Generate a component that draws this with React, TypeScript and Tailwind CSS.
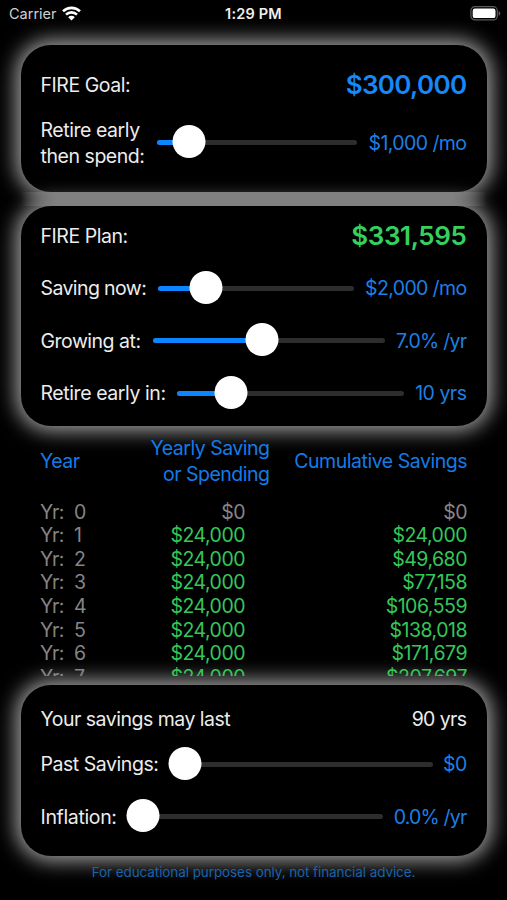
import type { ReactNode } from 'react';

interface SliderRowProps {
  label: ReactNode;
  labelClass: string;
  value: string;
  valueClass: string;
  // thumb centre, in percent of the track
  percent: number;
}

function SliderRow({ label, labelClass, value, valueClass, percent }: SliderRowProps) {
  return (
    <div className="flex items-center text-[19.5px] leading-[26px] whitespace-nowrap">
      <span className={`shrink-0 ${labelClass}`}>{label}</span>
      <div className="relative h-[5px] flex-1 rounded-full bg-[#2d2d2e]">
        <div className="h-full rounded-full bg-[#0a84ff]" style={{ width: `${percent}%` }} />
        <div
          className="absolute -top-[15px] size-[33px] -translate-x-1/2 rounded-full bg-white"
          style={{ left: `${percent}%` }}
        />
      </div>
      <span className={`shrink-0 text-right text-[#1c7fe4] ${valueClass}`}>{value}</span>
    </div>
  );
}

interface CardProps {
  className: string;
  children: ReactNode;
}

function Card({ className, children }: CardProps) {
  return (
    <section
      className={`mx-[20.5px] shrink-0 rounded-[30px] bg-black px-5 shadow-[0_0_20px_5px_#a0a0a0] ${className}`}
    >
      {children}
    </section>
  );
}

function StatusBar() {
  return (
    <header className="flex h-[44.5px] shrink-0 items-start justify-between pt-1 pr-[6px] pl-[9px] leading-5">
      <div className="flex w-[120px] items-center gap-[5px]">
        <span className="text-[14.5px] text-[#d0d0d0]">Carrier</span>
        <svg width="19" height="15" viewBox="0 0 19 15" className="-mt-[2px]" fill="none" stroke="#fff">
          <path d="M1 5.3a12.2 12.2 0 0 1 17 0" strokeWidth="2.6" />
          <path d="M4 8.6a7.9 7.9 0 0 1 11 0" strokeWidth="2.6" />
          <path d="M9.5 14.4 6.2 11.3a4.5 4.5 0 0 1 6.6 0Z" fill="#fff" stroke="none" />
        </svg>
      </div>
      <span className="-ml-[3px] text-[14.5px] font-semibold tracking-[0.2px] text-[#f0f0f0]">1:29 PM</span>
      <div className="flex w-[120px] justify-end pt-[2px]">
        <svg width="31" height="15" viewBox="0 0 31 15" fill="none">
          <rect x="0.9" y="0.7" width="26.4" height="13.2" rx="4" stroke="#5c5c5c" strokeWidth="1.2" />
          <rect x="2.7" y="2.5" width="22.8" height="9.6" rx="2.2" fill="#fff" />
          <path d="M28.6 5v4.8c1-.4 1.7-1.3 1.7-2.4S29.6 5.4 28.6 5Z" fill="#5c5c5c" />
        </svg>
      </div>
    </header>
  );
}

const rows = [
  { year: 0, yearly: '$0', total: '$0' },
  { year: 1, yearly: '$24,000', total: '$24,000' },
  { year: 2, yearly: '$24,000', total: '$49,680' },
  { year: 3, yearly: '$24,000', total: '$77,158' },
  { year: 4, yearly: '$24,000', total: '$106,559' },
  { year: 5, yearly: '$24,000', total: '$138,018' },
  { year: 6, yearly: '$24,000', total: '$171,679' },
  { year: 7, yearly: '$24,000', total: '$207,697' },
];

function SavingsTable() {
  return (
    <div className="relative z-10 flex h-[259px] shrink-0 flex-col px-10 pt-[9px] text-[19.5px]">
      <div className="flex h-[52px] shrink-0 items-center leading-[26px] tracking-[-0.5px] whitespace-nowrap text-[#147be6]">
        <span className="w-[100px]">Year</span>
        <span className="w-[129.5px] text-right">
          Yearly Saving
          <br />
          or Spending
        </span>
        <span className="flex-1 text-right tracking-[-0.47px]">Cumulative Savings</span>
      </div>
      <div className="mt-[13.5px] h-[175.5px] overflow-hidden">
        {rows.map((row) => (
          <div
            key={row.year}
            className={`flex h-[23.6px] items-center leading-none tracking-[-0.5px] ${row.year === 0 ? 'text-[#858585]' : 'text-[#35c759]'}`}
          >
            <span className="w-[34px] text-[#858585]">Yr:</span>
            <span className="w-[66px] text-[#858585]">{row.year}</span>
            <span className="w-[105px] text-right">{row.yearly}</span>
            <span className="flex-1 text-right">{row.total}</span>
          </div>
        ))}
      </div>
    </div>
  );
}

export default function App() {
  return (
    <main className="flex h-[900px] w-[507px] flex-col overflow-hidden bg-black font-['Inter',sans-serif] text-[#ececec]">
      <StatusBar />

      <Card className="flex h-[147px] flex-col pt-[24.5px]">
        <div className="flex h-8 items-center justify-between text-[19.5px]">
          <span className="pt-px tracking-[-0.45px]">FIRE Goal:</span>
          <span className="pb-[2px] text-[26px] font-semibold tracking-[-0.65px] text-[#1688fa]">$300,000</span>
        </div>
        <div className="mt-[15.5px]">
          <SliderRow
            label={
              <>
                Retire early
                <br />
                then spend:
              </>
            }
            labelClass="w-[116px] tracking-[-0.45px]"
            value="$1,000 /mo"
            valueClass="w-[109.5px] tracking-[-0.57px]"
            percent={16}
          />
        </div>
      </Card>

      {/* the two glows merge into one lighter band here */}
      <div className="relative mx-[20.5px] h-[14.5px] shrink-0 bg-[linear-gradient(to_right,transparent,#808080_36px,#808080_calc(100%-36px),transparent)]" />

      <Card className="flex h-[220px] flex-col pt-[14px]">
        <div className="flex h-8 items-center justify-between text-[19.5px]">
          <span className="pt-px tracking-[-0.45px]">FIRE Plan:</span>
          <span className="pb-[2px] text-[26px] font-semibold tracking-[-0.4px] text-[#36d15c]">$331,595</span>
        </div>
        <div className="mt-[23px] flex flex-col gap-[26.5px]">
          <SliderRow
            label="Saving now:"
            labelClass="w-[117.5px] tracking-[-0.6px]"
            value="$2,000 /mo"
            valueClass="w-[112.5px] tracking-[-0.63px]"
            percent={24.5}
          />
          <SliderRow
            label="Growing at:"
            labelClass="w-[112px] tracking-[-0.5px]"
            value="7.0% /yr"
            valueClass="w-[81.5px] tracking-[-0.7px]"
            percent={47}
          />
          <SliderRow
            label="Retire early in:"
            labelClass="w-[136.5px] tracking-[-0.42px]"
            value="10 yrs"
            valueClass="w-[63px] tracking-[-0.5px]"
            percent={24}
          />
        </div>
      </Card>

      <SavingsTable />

      <Card className="flex h-[171px] flex-col pt-[18px]">
        <div className="flex h-8 items-center justify-between pt-px text-[19.5px]">
          <span className="tracking-[-0.5px]">Your savings may last</span>
          <span className="tracking-[-0.6px]">90 yrs</span>
        </div>
        <div className="mt-4 flex flex-col gap-[26.5px]">
          <SliderRow
            label="Past Savings:"
            labelClass="w-[128.5px] tracking-[-0.45px]"
            value="$0"
            valueClass="w-[34px] tracking-[-0.7px]"
            percent={6.2}
          />
          <SliderRow
            label="Inflation:"
            labelClass="w-[86.5px] tracking-[-0.35px]"
            value="0.0% /yr"
            valueClass="w-[84px] tracking-[-0.8px]"
            percent={6.3}
          />
        </div>
      </Card>

      <footer className="relative mt-[6px] text-center text-[13.5px] leading-5 tracking-[-0.09px] text-[#1763ad]">
        For educational purposes only, not financial advice.
      </footer>
    </main>
  );
}
